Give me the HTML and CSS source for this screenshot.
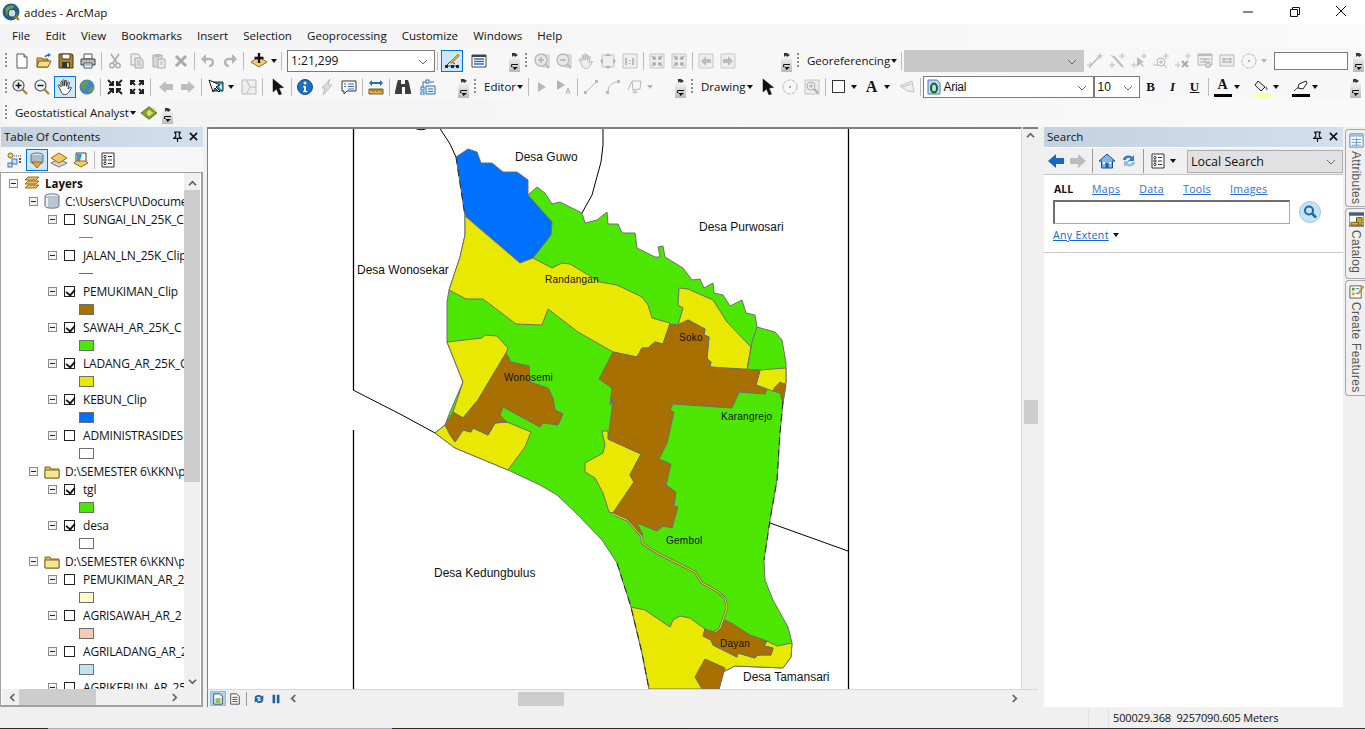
FILE: index.html
```html
<!DOCTYPE html>
<html lang="en">
<head>
<meta charset="utf-8">
<title>addes - ArcMap</title>
<link rel="stylesheet" href="styles.css">
</head>
<body>
<svg class="defs" width="0" height="0" aria-hidden="true">
  <defs>
    <symbol id="i-new" viewBox="0 0 16 16"><path d="M3 1h7l3 3v11H3z" fill="#fff" stroke="#555"/><path d="M10 1v3h3" fill="#ddd" stroke="#555"/></symbol>
    <symbol id="i-open" viewBox="0 0 16 16"><path d="M1 5h5l1 1h5v8H1z" fill="#d9b24a" stroke="#7a5b14"/><path d="M1 14l2-6h12l-3 6z" fill="#f5dc85" stroke="#7a5b14"/><path d="M9 4c1-2 3-2 4-2" fill="none" stroke="#1f6fb5" stroke-width="1.4"/><path d="M12 0l3 2-3 2z" fill="#1f6fb5"/></symbol>
    <symbol id="i-save" viewBox="0 0 16 16"><path d="M1 1h13l1 1v13H1z" fill="#a8842c" stroke="#4a3a10"/><path d="M4 1h8v5H4z" fill="#fff" stroke="#4a3a10"/><path d="M4 9h8v6H4z" fill="#39342a"/><path d="M9 10h2v4H9z" fill="#d9c88d"/></symbol>
    <symbol id="i-print" viewBox="0 0 16 16"><path d="M4 1h8v5H4z" fill="#fff" stroke="#555"/><path d="M1 6h14v6H1z" fill="#b9b9b9" stroke="#444"/><path d="M4 10h8v5H4z" fill="#fff" stroke="#555"/><path d="M5 12h6" stroke="#4a90d0"/></symbol>
    <symbol id="i-cut" viewBox="0 0 16 16"><path d="M4 1l6 9M12 1l-6 9" stroke="#aaa" stroke-width="1.6" fill="none"/><circle cx="5" cy="12.5" r="2.2" fill="none" stroke="#aaa" stroke-width="1.4"/><circle cx="11" cy="12.5" r="2.2" fill="none" stroke="#aaa" stroke-width="1.4"/></symbol>
    <symbol id="i-copy" viewBox="0 0 16 16"><path d="M2 1h7l2 2v9H2z" fill="#eee" stroke="#aaa"/><path d="M6 5h6l2 2v8H6z" fill="#e4e4e4" stroke="#aaa"/><path d="M8 8h4M8 10h4M8 12h4" stroke="#bbb"/></symbol>
    <symbol id="i-paste" viewBox="0 0 16 16"><path d="M2 2h9v12H2z" fill="#d8d8d8" stroke="#aaa"/><path d="M4 1h5v3H4z" fill="#bbb"/><path d="M7 6h7v9H7z" fill="#eee" stroke="#aaa"/><path d="M9 9h3M9 11h3" stroke="#bbb"/></symbol>
    <symbol id="i-del" viewBox="0 0 16 16"><path d="M3 3l10 10M13 3L3 13" stroke="#a9a9a9" stroke-width="3"/></symbol>
    <symbol id="i-undo" viewBox="0 0 16 16"><path d="M4 6h6c4 0 4 7-1 7" fill="none" stroke="#b4b4b4" stroke-width="2.4"/><path d="M6 1v10L1 6z" fill="#b4b4b4"/></symbol>
    <symbol id="i-redo" viewBox="0 0 16 16"><path d="M12 6H6c-4 0-4 7 1 7" fill="none" stroke="#b4b4b4" stroke-width="2.4"/><path d="M10 1v10l5-5z" fill="#b4b4b4"/></symbol>
    <symbol id="i-add" viewBox="0 0 16 16"><path d="M8 4l8 5-8 5-8-5z" fill="#f0cf7a" stroke="#8a6a1e"/><path d="M8 0v10M3.5 5h9" stroke="#111" stroke-width="2.4"/></symbol>
    <symbol id="i-edit" viewBox="0 0 16 16"><path d="M2 13h12" stroke="#444"/><path d="M2 13l5-5 4 3" fill="none" stroke="#444"/><rect x="1" y="12" width="3" height="3" fill="#222"/><rect x="7" y="12" width="3" height="3" fill="#222"/><rect x="12" y="12" width="3" height="3" fill="#222"/><path d="M6 9l8-8 1.5 1.5-8 8z" fill="#e3a93c" stroke="#8a5f10" stroke-width=".6"/></symbol>
    <symbol id="i-table" viewBox="0 0 16 16"><path d="M1 2h14v12H1z" fill="#fff" stroke="#444"/><path d="M1 2h14v2H1z" fill="#444"/><path d="M3 6h10M3 8.500h10M3 11h10" stroke="#2f6fc0" stroke-width="1.4"/></symbol>
    <symbol id="i-zin" viewBox="0 0 16 16"><circle cx="6.500" cy="6.500" r="5.500" fill="#eef3f7" stroke="#555" stroke-width="1.2"/><path d="M3.500 6.500h6M6.500 3.500v6" stroke="#111" stroke-width="1.5"/><path d="M10.500 10.500l4.500 4.500" stroke="#b37a3b" stroke-width="2.2"/></symbol>
    <symbol id="i-zout" viewBox="0 0 16 16"><circle cx="6.500" cy="6.500" r="5.500" fill="#eef3f7" stroke="#555" stroke-width="1.2"/><path d="M3.500 6.500h6" stroke="#111" stroke-width="1.5"/><path d="M10.500 10.500l4.500 4.500" stroke="#b37a3b" stroke-width="2.2"/></symbol>
    <symbol id="i-pan" viewBox="0 0 16 16"><path d="M3 10L1 6.500c0-1 1-1 1.500-.5L4 8V3c0-1 1.300-1 1.500 0L6 7V1.500c0-1 1.500-1 1.500 0V7l.8-5c.2-1 1.500-.8 1.400.2L9.500 7.500l1.500-4c.4-1 1.500-.6 1.300.4L11 10c2-2 3.500-2 3.500-1l-3 4.500c-1 1.500-2 2-4 2-2.500 0-3.500-2-4.500-5.500z" fill="#fff" stroke="#333" stroke-width=".9"/></symbol>
    <symbol id="i-globe" viewBox="0 0 16 16"><circle cx="8" cy="8" r="7.500" fill="#3f86c6"/><path d="M3 4c2-2 5-3 7-2l-1 3-3 1 1 3-2 2-3-3zM10 9l4-1 1 2-3 4-2-2z" fill="#6e9b3c"/></symbol>
    <symbol id="i-fin" viewBox="0 0 16 16"><path d="M1 1l5 5M6 2v4H2M15 1l-5 5M10 2v4h4M1 15l5-5M6 14v-4H2M15 15l-5-5M10 14v-4h4" fill="none" stroke="#222" stroke-width="2"/></symbol>
    <symbol id="i-fout" viewBox="0 0 16 16"><path d="M6 6L2 2M2 6V2h4M10 6l4-4M14 6V2h-4M6 10l-4 4M2 10v4h4M10 10l4 4M14 10v4h-4" fill="none" stroke="#222" stroke-width="2"/></symbol>
    <symbol id="i-back" viewBox="0 0 16 16"><path d="M1 8l7-6v3h7v6H8v3z" fill="#bdbdbd"/></symbol>
    <symbol id="i-fwd" viewBox="0 0 16 16"><path d="M15 8L8 2v3H1v6h7v3z" fill="#bdbdbd"/></symbol>
    <symbol id="i-sel" viewBox="0 0 16 16"><path d="M5 3h10v9H5z" fill="#27a3c9" stroke="#333"/><path d="M8 4l6 2v5z" fill="#e8eef2"/><path d="M1 1l4 12 2-4 4 4 1-1-4-4 4-2z" fill="#fff" stroke="#111"/></symbol>
    <symbol id="i-clear" viewBox="0 0 16 16"><path d="M1 1h14v14H1z" fill="#eee" stroke="#bbb"/><path d="M6 2l3 6-3 6M9 8h6" fill="none" stroke="#bbb"/></symbol>
    <symbol id="i-arrow" viewBox="0 0 16 16"><path d="M3 0l0 13 3.500-3 2.500 6 2.500-1-2.500-6 4.500-.5z" fill="#111" stroke="#111" stroke-width=".5"/></symbol>
    <symbol id="i-info" viewBox="0 0 16 16"><circle cx="8" cy="8" r="7.500" fill="#1c6dc4" stroke="#0f4f95"/><circle cx="8" cy="4" r="1.500" fill="#fff"/><path d="M6 7h3v5h1.200v1.200H6V12h1V8.200H6z" fill="#fff"/></symbol>
    <symbol id="i-bolt" viewBox="0 0 16 16"><path d="M11 0L3 9h3l-2 7 9-10h-4z" fill="#dedede" stroke="#bbb"/></symbol>
    <symbol id="i-pop" viewBox="0 0 16 16"><path d="M1 2h14v10H6l-3 3v-3H1z" fill="#fff" stroke="#333"/><path d="M3 5h2M7 5h6M3 7.500h2M7 7.500h6M7 10h6" stroke="#2c6fb3"/></symbol>
    <symbol id="i-meas" viewBox="0 0 16 16"><path d="M1 10h14v5H1z" fill="#e2b454" stroke="#7a5b14"/><path d="M3 10v2M5 10v3M7 10v2M9 10v3M11 10v2M13 10v3" stroke="#7a5b14"/><path d="M1 4l3-3v2h8V1l3 3-3 3V5H4v2z" fill="#1f6fb5"/></symbol>
    <symbol id="i-bino" viewBox="0 0 16 16"><path d="M2 4l1-3h3v4h4V1h3l1 3 2 9v2h-6V8H7v7H0v-2z" fill="#3d3d3d"/></symbol>
    <symbol id="i-tool" viewBox="0 0 16 16"><path d="M6 7h9v8H6z" fill="#eaf2f9" stroke="#2c6fb3"/><path d="M8 10h5M8 12.500h5" stroke="#2c6fb3"/><rect x="1" y="8" width="3" height="3" fill="#fff" stroke="#2c6fb3"/><rect x="1" y="13" width="3" height="3" fill="#fff" stroke="#2c6fb3"/><rect x="6" y="1" width="3" height="3" fill="#fff" stroke="#2c6fb3"/><path d="M3 8V3h3M10 3h4" fill="none" stroke="#2c6fb3"/></symbol>
    <symbol id="g-zin" viewBox="0 0 16 16"><path d="M9 2h6v12H9z" fill="#e6e6e6" stroke="#c4c4c4"/><circle cx="7" cy="7" r="6" fill="#e8e8e8" stroke="#b9b9b9" stroke-width="1.400"/><path d="M4 7h6M7 4v6" stroke="#b0b0b0" stroke-width="1.500"/><path d="M11 11l4 4" stroke="#b9b9b9" stroke-width="2"/></symbol>
    <symbol id="g-zout" viewBox="0 0 16 16"><path d="M9 2h6v12H9z" fill="#e6e6e6" stroke="#c4c4c4"/><circle cx="7" cy="7" r="6" fill="#e8e8e8" stroke="#b9b9b9" stroke-width="1.400"/><path d="M4 7h6" stroke="#b0b0b0" stroke-width="1.500"/><path d="M11 11l4 4" stroke="#b9b9b9" stroke-width="2"/></symbol>
    <symbol id="g-pan" viewBox="0 0 16 16"><path d="M3 10L1 6.500c0-1 1-1 1.500-.5L4 8V3c0-1 1.300-1 1.500 0L6 7V1.500c0-1 1.500-1 1.500 0V7l.8-5c.2-1 1.500-.8 1.400.2L9.500 7.500l1.500-4c.4-1 1.500-.6 1.300.4L11 10c2-2 3.500-2 3.500-1l-3 4.500c-1 1.500-2 2-4 2-2.500 0-3.500-2-4.500-5.500z" fill="#eee" stroke="#b9b9b9"/></symbol>
    <symbol id="g-full" viewBox="0 0 16 16"><path d="M2 2h12v12H2z" fill="#eee" stroke="#c4c4c4"/><path d="M8 0l3 3H5zM8 16l-3-3h6zM0 8l3-3v6zM16 8l-3 3V5z" fill="#b4b4b4"/></symbol>
    <symbol id="g-one" viewBox="0 0 16 16"><path d="M1 1h14v14H1z" fill="#eee" stroke="#c4c4c4"/><path d="M4 5v7M7.500 7v1M7.500 10v1M11 5v7" stroke="#aaa" stroke-width="1.500"/></symbol>
    <symbol id="g-fin" viewBox="0 0 16 16"><path d="M1 1h14v14H1z" fill="#eee" stroke="#c9c9c9"/><path d="M3 3l3 3M6 3.500V6H3.500M13 3l-3 3M10 3.500V6h2.500M3 13l3-3M6 12.500V10H3.500M13 13l-3-3M10 12.500V10h2.500" fill="none" stroke="#aaa" stroke-width="1.500"/></symbol>
    <symbol id="g-back" viewBox="0 0 16 16"><path d="M1 1h14v14H1z" fill="#eee" stroke="#c9c9c9"/><path d="M3 8l5-5v3h5v4H8v3z" fill="#bbb"/></symbol>
    <symbol id="g-fwd" viewBox="0 0 16 16"><path d="M1 1h14v14H1z" fill="#eee" stroke="#c9c9c9"/><path d="M13 8L8 3v3H3v4h5v3z" fill="#bbb"/></symbol>
    <symbol id="g-tri" viewBox="0 0 16 16"><path d="M4 3l8 5-8 5z" fill="#b9b9b9"/></symbol>
    <symbol id="g-tria" viewBox="0 0 16 16"><path d="M1 1l8 5-8 5z" fill="#b4b4b4"/><path d="M10 15l2-6 2 6M11 13h2" fill="none" stroke="#b4b4b4"/></symbol>
    <symbol id="g-line" viewBox="0 0 16 16"><path d="M3 13L13 3" stroke="#b9b9b9"/><rect x="1" y="12" width="3" height="3" fill="#b9b9b9"/><rect x="12" y="1" width="3" height="3" fill="#b9b9b9"/></symbol>
    <symbol id="g-curve" viewBox="0 0 16 16"><path d="M3 13C3 7 7 3 13 3" fill="none" stroke="#b9b9b9"/><rect x="1" y="12" width="3" height="3" fill="#b9b9b9"/><rect x="12" y="1" width="3" height="3" fill="#b9b9b9"/></symbol>
    <symbol id="g-poly" viewBox="0 0 16 16"><path d="M5 2h9l-1 8-7 1z M5 2L1 11" fill="none" stroke="#b9b9b9"/><path d="M8 10v5M5 13h6" stroke="#b9b9b9"/></symbol>
    <symbol id="g-rot" viewBox="0 0 16 16"><circle cx="8" cy="8" r="7" fill="none" stroke="#bbb" stroke-dasharray="4 1"/><rect x="7" y="7" width="2" height="2" fill="#aaa"/></symbol>
    <symbol id="g-snap" viewBox="0 0 16 16"><path d="M1 1h14v14H1z" fill="#ececec" stroke="#c4c4c4"/><circle cx="7" cy="7" r="4" fill="none" stroke="#aaa"/><path d="M5 7h4M7 5v4" stroke="#aaa"/><path d="M10 10l4 4" stroke="#aaa" stroke-width="2"/></symbol>
    <symbol id="g-shape" viewBox="0 0 16 16"><path d="M1 7l12-5 2 11-7-1z" fill="#eee" stroke="#c4c4c4"/><path d="M3 8l9-3" stroke="#c4c4c4"/></symbol>
    <symbol id="g-link" viewBox="0 0 16 16"><path d="M2 14L14 2" stroke="#b4b4b4" stroke-width="1.300"/><path d="M10 3h6M13 0v6M0 12h6M3 9v6" stroke="#c0c0c0"/></symbol>
    <symbol id="g-wand" viewBox="0 0 16 16"><path d="M4 3l10 11" stroke="#bdbdbd" stroke-width="2"/><path d="M10 3h6M13 0v6M0 12h6M3 9v6" stroke="#c0c0c0"/><path d="M2 2l2 2" stroke="#ccc"/></symbol>
    <symbol id="g-ptr" viewBox="0 0 16 16"><path d="M6 4l0 10 3-3 3 3 1-1-3-3 3-1z" fill="#bbb"/><path d="M10 3h6M13 0v6M0 12h6M3 9v6" stroke="#c0c0c0"/></symbol>
    <symbol id="g-zmp" viewBox="0 0 16 16"><circle cx="8" cy="9" r="4" fill="none" stroke="#b4b4b4"/><path d="M6 9h4M8 7v4M11 12l3 3" stroke="#b4b4b4"/><path d="M10 3h6M13 0v6M0 12h5" stroke="#c0c0c0"/></symbol>
    <symbol id="g-xpt" viewBox="0 0 16 16"><path d="M7 8l6 6M13 8l-6 6" stroke="#aaa" stroke-width="2"/><path d="M10 3h6M13 0v6M0 12h5M3 9v6" stroke="#c0c0c0"/></symbol>
    <symbol id="g-tb1" viewBox="0 0 16 16"><path d="M1 1h14v11H1z" fill="#eee" stroke="#b9b9b9"/><path d="M1 1h14v2H1z" fill="#bbb"/><path d="M3 6h10M3 9h10M8 6v3" stroke="#aaa"/><circle cx="11" cy="12" r="2.500" fill="#ddd" stroke="#aaa"/></symbol>
    <symbol id="g-tb2" viewBox="0 0 16 16"><path d="M1 2h14v11H1z" fill="#eee" stroke="#b9b9b9"/><path d="M3 6h10M3 9h10M5 5v5M11 5v5" stroke="#aaa"/></symbol>
    <symbol id="i-tocl" viewBox="0 0 16 16"><path d="M5 4h10M5 8h2" stroke="#444" stroke-dasharray="1 1"/><circle cx="3.500" cy="3.500" r="2.500" fill="#f0cf7a" stroke="#8a6a1e"/><rect x="5" y="7" width="5" height="5" fill="#cfe0f2" stroke="#3a78b5"/><rect x="1" y="11" width="4" height="4" fill="#cfe0f2" stroke="#3a78b5"/><path d="M12 7h2M12 10h2" stroke="#222" stroke-width="1.500"/></symbol>
    <symbol id="i-tocd" viewBox="0 0 16 16"><ellipse cx="8" cy="3" rx="6" ry="2" fill="#dfe5ea" stroke="#5f6f7e"/><path d="M2 3v7c0 1 2 2 6 2s6-1 6-2V3" fill="#aebbc7" stroke="#5f6f7e"/><path d="M3 10h10l-5 6z" fill="#e8a92e" stroke="#9b6a0d"/></symbol>
    <symbol id="i-tocv" viewBox="0 0 16 16"><path d="M8 7l8 4-8 4-8-4z" fill="#d6d6d6" stroke="#777"/><path d="M8 1l8 5-8 5-8-5z" fill="#f2c964" stroke="#9b6a0d"/></symbol>
    <symbol id="i-tocs" viewBox="0 0 16 16"><path d="M3 1h10v9H3z" fill="#fff" stroke="#444"/><path d="M4 2h5l-2 7H4z" fill="#2aa3c9"/><path d="M3 9h10l2 2-7 4-7-4z" fill="#f2c964" stroke="#9b6a0d"/></symbol>
    <symbol id="i-list" viewBox="0 0 16 16"><path d="M2 1h12v14H2z" fill="#fff" stroke="#333"/><circle cx="5" cy="4.500" r="1.200" fill="none" stroke="#333"/><circle cx="5" cy="8" r="1.200" fill="none" stroke="#333"/><circle cx="5" cy="11.500" r="1.200" fill="none" stroke="#333"/><path d="M8 4.500h4M8 8h4M8 11.500h4" stroke="#333"/></symbol>
    <symbol id="i-layers" viewBox="0 0 16 16"><path d="M4 2h11l-3 3H1zM4 6h11l-3 3H1zM4 10h11l-3 3H1z" fill="#eec05b" stroke="#8a6113" stroke-width=".9"/></symbol>
    <symbol id="i-db" viewBox="0 0 16 16"><ellipse cx="8" cy="3" rx="7" ry="2.200" fill="#e6ebf0" stroke="#6b7884"/><path d="M1 3v10c0 1.300 3 2.200 7 2.200s7-.9 7-2.200V3" fill="#b8c4cf" stroke="#6b7884"/><path d="M3 5v9" stroke="#eef" stroke-width="2"/></symbol>
    <symbol id="i-folder" viewBox="0 0 16 16"><path d="M1 3h5l1 2h8v9H1z" fill="#d7b957" stroke="#806a25"/><path d="M1 6h14v8H1z" fill="#f6e592" stroke="#806a25"/></symbol>
    <symbol id="i-home" viewBox="0 0 16 16"><path d="M8 1L0 8h2.500v7h11V8H16z" fill="#7fb6e6" stroke="#174f8c"/><path d="M6.500 10h3v5h-3z" fill="#1f5fa5"/><path d="M4 9h2v2H4zM10 9h2v2h-2z" fill="#fff"/></symbol>
    <symbol id="i-ref" viewBox="0 0 16 16"><path d="M2 7c0-4 6-6 9-3l2-2v6H7l2.500-2.500C8 4 5 5 5 7z" fill="#2f7fc7"/><path d="M14 9c0 4-6 6-9 3l-2 2V8h6l-2.500 2.500C8 12 11 11 11 9z" fill="#8fbde6"/></symbol>
    <symbol id="i-blue" viewBox="0 0 16 16"><path d="M0 8l8-7v4h8v6H8v4z" fill="#1867c0"/></symbol>
    <symbol id="i-grey" viewBox="0 0 16 16"><path d="M16 8L8 1v4H0v6h8v4z" fill="#bdbdbd"/></symbol>
    <symbol id="i-pin" viewBox="0 0 10 12"><path d="M2 1h6v1H7v4l2 2H1l2-2V2H2zM5 8v4" fill="none" stroke="#111" stroke-width="1.300"/></symbol>
    <symbol id="i-x" viewBox="0 0 10 10"><path d="M1 1l8 8M9 1L1 9" stroke="#111" stroke-width="1.800"/></symbol>
    <symbol id="i-chev" viewBox="0 0 10 6"><path d="M1 1l4 4 4-4" fill="none" stroke="#666"/></symbol>
    <symbol id="i-up" viewBox="0 0 10 8"><path d="M1 6l4-4 4 4" fill="none" stroke="#606060" stroke-width="2"/></symbol>
    <symbol id="i-dn" viewBox="0 0 10 8"><path d="M1 2l4 4 4-4" fill="none" stroke="#606060" stroke-width="2"/></symbol>
    <symbol id="i-lt" viewBox="0 0 8 10"><path d="M6 1L2 5l4 4" fill="none" stroke="#606060" stroke-width="2"/></symbol>
    <symbol id="i-rt" viewBox="0 0 8 10"><path d="M2 1l4 4-4 4" fill="none" stroke="#606060" stroke-width="2"/></symbol>
    <symbol id="i-dv" viewBox="0 0 14 14"><path d="M2 1h7l3 3v9H2z" fill="#fff" stroke="#333"/><path d="M4 6h6v6H4z" fill="#8ec06c"/></symbol>
    <symbol id="i-lv" viewBox="0 0 14 14"><path d="M2 1h7l3 3v9H2z" fill="#fff" stroke="#333"/><path d="M4 5h6M4 7.500h6M4 10h6" stroke="#333"/></symbol>
    <symbol id="i-spin" viewBox="0 0 14 14"><path d="M2 6c0-4 6-5 8-2l2-1v5H7l2-2C8 4 5 4 4 6z" fill="#1c5f9f"/><path d="M12 8c0 4-6 5-8 2l-2 1V6h5L5 8c1 2 4 2 5 0z" fill="#1c5f9f"/></symbol>
    <symbol id="i-pause" viewBox="0 0 14 14"><path d="M3 2h3v10H3zM8 2h3v10H8z" fill="#1c5f9f"/></symbol>
    <symbol id="i-fontO" viewBox="0 0 14 16"><path d="M1 1h9l3 3v11H1z" fill="#bcd8f3" stroke="#4a7fb5"/><ellipse cx="7" cy="9" rx="3" ry="4.500" fill="none" stroke="#0d6b0d" stroke-width="2"/></symbol>
    <symbol id="i-geo" viewBox="0 0 18 16"><path d="M9 1l9 7-9 7-9-7z" fill="#7f9f2c" stroke="#56701a"/><path d="M9 4l5 4-5 4-3-4z" fill="#d7de6f"/><path d="M12 1l5 3-2 2z" fill="#e8d66b"/></symbol>
    <symbol id="i-fill" viewBox="0 0 16 12"><path d="M4 1l7 6-4 4-6-6z" fill="#eee" stroke="#222"/><path d="M12 6c2 2 2 4 1 4s-2-2-1-4z" fill="#777"/></symbol>
    <symbol id="i-pen" viewBox="0 0 16 12"><path d="M5 8l1-4 7-3 1 2-4 6z" fill="#fff" stroke="#222"/><path d="M1 11c2-2 3-3 4-3" fill="none" stroke="#222"/></symbol>
    <symbol id="i-tabA" viewBox="0 0 16 16"><path d="M1 1h14v14H1z" fill="#fff" stroke="#4a7fb5"/><path d="M1 1h14v3H1z" fill="#9dbde0"/><path d="M3 7h10M3 10h10M3 13h10M8 5v9" stroke="#6a95c4"/></symbol>
    <symbol id="i-tabC" viewBox="0 0 16 16"><path d="M0 1h16v14H0z" fill="#fff" stroke="#333"/><path d="M0 1h16v3H0z" fill="#3a5f9a"/><path d="M8 6h6v8H8z" fill="#c9a72c" stroke="#6b5510"/><path d="M2 11h8v3H2z" fill="#d8b53a" stroke="#6b5510"/></symbol>
    <symbol id="i-tabF" viewBox="0 0 16 16"><path d="M1 2h12v13H1z" fill="#fff" stroke="#555"/><path d="M3 4h3v3H3z" fill="#4aa04a"/><path d="M3 9h3v3H3z" fill="#d8a23a"/><path d="M7 5h4M7 10h4" stroke="#3a6fb5"/><path d="M9 10l6-8 1 1-6 8z" fill="#e8a92e" stroke="#8a5f10" stroke-width=".5"/></symbol>
    <symbol id="i-lens" viewBox="0 0 22 22"><circle cx="11" cy="11" r="10.500" fill="#c3e2f5" stroke="#9cc8e4"/><circle cx="10" cy="9.500" r="4" fill="none" stroke="#176a9e" stroke-width="2"/><path d="M13 12.500l4 4" stroke="#176a9e" stroke-width="2.500"/></symbol>
  </defs>
</svg>

<div class="app">
  <header class="title">
    <svg class="appicon" viewBox="0 0 16 16"><circle cx="8" cy="8" r="7.500" fill="#1f5f8f"/><path d="M3 5c2-3 6-4 8-2l-2 3-3 1 1 3-3 1zM10 10l4-2-1 4-3 2z" fill="#66a05a"/><circle cx="9" cy="9" r="3.500" fill="#bfe0ef" stroke="#333"/><path d="M12 12l3 3" stroke="#a8752a" stroke-width="2"/></svg>
    <span class="title-text">addes - ArcMap</span>
    <div class="winbtns">
      <svg class="wb" viewBox="0 0 46 24"><path d="M17 12h10" stroke="#111"/></svg>
      <svg class="wb" viewBox="0 0 46 24"><path d="M18.500 9.500h7v7h-7zM20.500 9.500v-2h7v7h-2" fill="none" stroke="#111"/></svg>
      <svg class="wb" viewBox="0 0 46 24"><path d="M18 6l10 10M28 6L18 16" stroke="#111"/></svg>
    </div>
  </header>

  <nav class="menu">
    <span>File</span><span>Edit</span><span>View</span><span>Bookmarks</span><span>Insert</span><span>Selection</span><span>Geoprocessing</span><span>Customize</span><span>Windows</span><span>Help</span>
  </nav>

  <div class="bars">
    <div class="row">
      <div class="tb t1">
        <i class="grip"></i>
        <b class="ic"><svg><use href="#i-new"/></svg></b><b class="ic"><svg><use href="#i-open"/></svg></b><b class="ic"><svg><use href="#i-save"/></svg></b><b class="ic"><svg><use href="#i-print"/></svg></b>
        <i class="sep"></i>
        <b class="ic"><svg><use href="#i-cut"/></svg></b><b class="ic"><svg><use href="#i-copy"/></svg></b><b class="ic"><svg><use href="#i-paste"/></svg></b><b class="ic"><svg><use href="#i-del"/></svg></b>
        <i class="sep"></i>
        <b class="ic"><svg><use href="#i-undo"/></svg></b><b class="ic"><svg><use href="#i-redo"/></svg></b>
        <i class="sep"></i>
        <b class="ic m2"><svg><use href="#i-add"/></svg></b><i class="drop"></i>
        <i class="sep"></i>
        <div class="combo scale m3"><span>1:21,299</span><svg class="chev"><use href="#i-chev"/></svg></div>
        <i class="sep"></i>
        <b class="ic on m1"><svg><use href="#i-edit"/></svg></b><b class="ic m5"><svg><use href="#i-table"/></svg></b>
      </div>
      <i class="over o1"></i>
      <div class="tb t2">
        <i class="grip"></i>
        <b class="ic"><svg><use href="#g-zin"/></svg></b><b class="ic"><svg><use href="#g-zout"/></svg></b><b class="ic"><svg><use href="#g-pan"/></svg></b><b class="ic"><svg><use href="#g-full"/></svg></b><b class="ic"><svg><use href="#g-one"/></svg></b>
        <i class="sep"></i>
        <b class="ic"><svg><use href="#g-fin"/></svg></b><b class="ic"><svg><use href="#g-fin"/></svg></b>
        <i class="sep"></i>
        <b class="ic"><svg><use href="#g-back"/></svg></b><b class="ic"><svg><use href="#g-fwd"/></svg></b>
      </div>
      <i class="over o2"></i>
      <div class="tb t3">
        <i class="grip"></i>
        <span class="lab geo">Georeferencing</span><i class="drop dk"></i>
        <i class="sep"></i>
        <div class="combo georef"><svg class="chev"><use href="#i-chev"/></svg></div>
        <b class="ic"><svg><use href="#g-link"/></svg></b><b class="ic"><svg><use href="#g-wand"/></svg></b><b class="ic"><svg><use href="#g-ptr"/></svg></b><b class="ic"><svg><use href="#g-zmp"/></svg></b><b class="ic"><svg><use href="#g-xpt"/></svg></b><b class="ic"><svg><use href="#g-tb1"/></svg></b><b class="ic"><svg><use href="#g-tb2"/></svg></b><b class="ic"><svg><use href="#g-rot"/></svg></b><i class="drop lt"></i>
        <div class="combo rotinp"></div>
      </div>
      <i class="over o3"></i>
    </div>

    <div class="row">
      <div class="tb t4">
        <i class="grip"></i>
        <b class="ic"><svg><use href="#i-zin"/></svg></b><b class="ic"><svg><use href="#i-zout"/></svg></b><b class="ic on m1"><svg><use href="#i-pan"/></svg></b><b class="ic"><svg><use href="#i-globe"/></svg></b>
        <i class="sep"></i>
        <b class="ic m1"><svg><use href="#i-fin"/></svg></b><b class="ic"><svg><use href="#i-fout"/></svg></b>
        <i class="sep"></i>
        <b class="ic m2"><svg><use href="#i-back"/></svg></b><b class="ic"><svg><use href="#i-fwd"/></svg></b>
        <i class="sep"></i>
        <b class="ic m1"><svg><use href="#i-sel"/></svg></b><i class="drop"></i><b class="ic m2"><svg><use href="#i-clear"/></svg></b>
        <i class="sep"></i>
        <b class="ic m2"><svg><use href="#i-arrow"/></svg></b>
        <i class="sep"></i>
        <b class="ic"><svg><use href="#i-info"/></svg></b><b class="ic"><svg><use href="#i-bolt"/></svg></b><b class="ic"><svg><use href="#i-pop"/></svg></b>
        <i class="sep"></i>
        <b class="ic"><svg><use href="#i-meas"/></svg></b>
        <i class="sep"></i>
        <b class="ic"><svg><use href="#i-bino"/></svg></b><b class="ic m3"><svg><use href="#i-tool"/></svg></b>
      </div>
      <i class="over o4"></i>
      <div class="tb t5">
        <i class="grip"></i>
        <span class="lab">Editor</span><i class="drop dk"></i>
        <i class="sep m2"></i>
        <b class="ic"><svg><use href="#g-tri"/></svg></b><b class="ic"><svg><use href="#g-tria"/></svg></b>
        <i class="sep"></i>
        <b class="ic"><svg><use href="#g-line"/></svg></b><b class="ic"><svg><use href="#g-curve"/></svg></b><b class="ic"><svg><use href="#g-poly"/></svg></b><i class="drop lt"></i>
      </div>
      <i class="over o5"></i>
      <div class="tb t6">
        <i class="grip"></i>
        <span class="lab">Drawing</span><i class="drop dk"></i>
        <b class="ic m2"><svg><use href="#i-arrow"/></svg></b><b class="ic"><svg><use href="#g-rot"/></svg></b><b class="ic"><svg><use href="#g-snap"/></svg></b>
        <i class="sep"></i>
        <b class="ic"><span class="rect"></span></b><i class="drop dk"></i>
        <b class="ic bigA m2">A</b><i class="drop dk"></i>
        <b class="ic m4"><svg><use href="#g-shape"/></svg></b>
        <i class="sep"></i>
        <div class="combo font"><svg class="fo"><use href="#i-fontO"/></svg><span>Arial</span><svg class="chev"><use href="#i-chev"/></svg></div>
        <div class="combo size"><span>10</span><svg class="chev"><use href="#i-chev"/></svg></div>
        <b class="fmt">B</b><b class="fmt it">I</b><b class="fmt un">U</b>
        <i class="sep"></i>
        <b class="colr m2"><span class="cA">A</span><i class="cbar cb-k"></i></b><i class="drop dk"></i>
        <b class="colr m10"><svg class="cs"><use href="#i-fill"/></svg><i class="cbar cb-y"></i></b><i class="drop dk"></i>
        <b class="colr m10"><svg class="cs"><use href="#i-pen"/></svg><i class="cbar cb-k"></i></b><i class="drop dk"></i>
      </div>
      <i class="over o6"></i>
    </div>

    <div class="row">
      <div class="tb t7">
        <i class="grip"></i>
        <span class="lab gs">Geostatistical Analyst</span><i class="drop dk"></i>
        <b class="ic"><svg><use href="#i-geo"/></svg></b>
      </div>
      <i class="over o7"></i>
    </div>
  </div>

  <main class="main">
    <section class="toc">
      <div class="dockhead"><span>Table Of Contents</span><svg class="pin"><use href="#i-pin"/></svg><svg class="close"><use href="#i-x"/></svg></div>
      <div class="toctools">
        <b class="ic"><svg><use href="#i-tocl"/></svg></b><b class="ic on"><svg><use href="#i-tocd"/></svg></b><b class="ic"><svg><use href="#i-tocv"/></svg></b><b class="ic"><svg><use href="#i-tocs"/></svg></b>
        <i class="sep"></i>
        <b class="ic"><svg><use href="#i-list"/></svg></b>
      </div>
      <div class="treebox">
        <div class="treewrap">
          <div class="tree">
            <div class="tr l0"><i class="ex"></i><svg class="ti"><use href="#i-layers"/></svg><strong>Layers</strong></div>
            <div class="tr l1"><i class="ex"></i><svg class="ti"><use href="#i-db"/></svg><span>C:\Users\CPU\Documen</span></div>
            <div class="tr l2"><i class="ex"></i><i class="cb"></i><span>SUNGAI_LN_25K_C</span></div>
            <div class="lg"><i class="ln ln-b"></i></div>
            <div class="tr l2"><i class="ex"></i><i class="cb"></i><span>JALAN_LN_25K_Clip</span></div>
            <div class="lg"><i class="ln ln-r"></i></div>
            <div class="tr l2"><i class="ex"></i><i class="cb ck"></i><span>PEMUKIMAN_Clip</span></div>
            <div class="lg"><i class="sw s-br"></i></div>
            <div class="tr l2"><i class="ex"></i><i class="cb ck"></i><span>SAWAH_AR_25K_C</span></div>
            <div class="lg"><i class="sw s-gr"></i></div>
            <div class="tr l2"><i class="ex"></i><i class="cb ck"></i><span>LADANG_AR_25K_C</span></div>
            <div class="lg"><i class="sw s-ye"></i></div>
            <div class="tr l2"><i class="ex"></i><i class="cb ck"></i><span>KEBUN_Clip</span></div>
            <div class="lg"><i class="sw s-bl"></i></div>
            <div class="tr l2"><i class="ex"></i><i class="cb"></i><span>ADMINISTRASIDES</span></div>
            <div class="lg"><i class="sw s-wh"></i></div>
            <div class="tr l1"><i class="ex"></i><svg class="ti"><use href="#i-folder"/></svg><span>D:\SEMESTER 6\KKN\p</span></div>
            <div class="tr l2"><i class="ex"></i><i class="cb ck"></i><span>tgl</span></div>
            <div class="lg"><i class="sw s-gr"></i></div>
            <div class="tr l2"><i class="ex"></i><i class="cb ck"></i><span>desa</span></div>
            <div class="lg"><i class="sw s-wh"></i></div>
            <div class="tr l1"><i class="ex"></i><svg class="ti"><use href="#i-folder"/></svg><span>D:\SEMESTER 6\KKN\p</span></div>
            <div class="tr l2"><i class="ex"></i><i class="cb"></i><span>PEMUKIMAN_AR_2</span></div>
            <div class="lg"><i class="sw s-py"></i></div>
            <div class="tr l2"><i class="ex"></i><i class="cb"></i><span>AGRISAWAH_AR_2</span></div>
            <div class="lg"><i class="sw s-pk"></i></div>
            <div class="tr l2"><i class="ex"></i><i class="cb"></i><span>AGRILADANG_AR_2</span></div>
            <div class="lg"><i class="sw s-pb"></i></div>
            <div class="tr l2"><i class="ex"></i><i class="cb"></i><span>AGRIKEBUN_AR_25</span></div>
          </div>
          <div class="vs tocv"><svg class="sa"><use href="#i-up"/></svg><i class="thumb"></i><svg class="sa dn"><use href="#i-dn"/></svg></div>
        </div>
        <div class="hs toch"><svg class="sb"><use href="#i-lt"/></svg><i class="thumb"></i><svg class="sb rt"><use href="#i-rt"/></svg></div>
      </div>
    </section>

    <section class="mapcol">
      <div class="maprow">
        <svg class="map" viewBox="208 129 813 560" preserveAspectRatio="none">
          <g fill="none" stroke="#000">
            <path d="M353.500 127V390M353.500 430V690" stroke-width="1.300"/>
            <path d="M848.500 127V690" stroke-width="1.300"/>
            <path d="M353 390L400 414L435 433"/>
            <path d="M770 523L848 551"/>
            <path d="M439 127L450 144L456 157"/>
            <path d="M413 127Q420 132 428 128"/>
            <path d="M603 127V145L601 162L592 195L582 213"/>
          </g>
          <g stroke="#6e6e6e" stroke-width="1" stroke-linejoin="round">
            <path fill="#4ce600" d="M528 195L537 187L545 193L552 204L560 202L582 213L585 223L597 220L607 212L608 224L618 224L622 233L635 233L637 248L655 257L660 257L658 247L663 246L665 257L683 268L692 280L700 279L704 288L713 283L714 293L723 295L730 306L742 300L746 313L755 315L757 327L775 332L782 340L786 363L786 382L783 402L780 433L777 480L770 520L764 560L765 580L773 600L788 627L792 643L791 657L783 668L735 666L723 672L719 689L649 689L642 653L631 607L617 563L602 540L575 512L557 495L540 485L508 470L455 448L435 433L445 425L450 412L463 382L455 362L447 342L447 302L449 290L460 257L465 235L465 216Z"/>
            <path fill="#0070ff" d="M456 157L468 149L477 152L481 163L492 163L503 172L517 172L528 180L528 195L552 222L551 235L533 258L520 263L465 216Z"/>
            <path fill="#e8e800" d="M465 216L520 263L533 258L552 268L562 263L570 264L600 282L617 285L642 297L648 305L652 318L670 323L663 344L655 342L648 348L642 348L637 357L613 352L578 332L548 309L542 325L516 324L483 299L466 299L449 290L460 257L465 235Z"/>
            <path fill="#e8e800" d="M447 342L482 338L485 335L497 336L508 348L506 353L478 400L463 418L453 412L463 382L455 362Z"/>
            <path fill="#e8e800" d="M435 433L445 425L455 431L455 442L463 430L471 432L473 428L488 435L495 423L507 422L531 432L525 447L508 470L455 448Z"/>
            <path fill="#e8e800" d="M602 431L608 431L608 439L641 454L630 475L634 482L613 513L609 512L603 493L595 478L585 472L585 463L603 453L605 445Z"/>
            <path fill="#e8e800" d="M679 288L688 289L713 300L727 322L751 347L747 370L710 367L711 362L707 358L709 337L704 335L705 329L688 320L678 325L683 308L678 305Z"/>
            <path fill="none" d="M757 327L752 342L747 370"/>
            <path fill="#e8e800" d="M760 370L786 368L786 383L775 387L773 391L756 385Z"/>
            <path fill="#a87000" d="M775 387L780 382L786 385L783 403L780 393L773 391Z"/>
            <path fill="#a87000" d="M506 353L511 362L529 366L530 382L548 388L553 398L555 410L563 414L558 425L543 423L540 427L503 407L500 415L507 422L495 423L488 435L473 428L471 432L463 430L455 442L450 435L445 425L453 412L463 418L478 400Z"/>
            <path fill="#a87000" d="M670 324L678 325L688 320L705 329L704 335L709 337L707 358L711 362L710 367L760 370L756 385L767 390L765 394L739 392L732 408L673 404L670 410L674 412L667 443L659 459L671 464L666 485L676 492L674 506L678 507L672 528L663 526L657 531L637 523L643 535L640 536L627 520L613 513L634 482L630 475L641 454L608 439L613 400L610 405L612 388L599 379L613 352L637 357L642 348L648 348L655 342L663 344Z"/>
            <path fill="#e8e800" d="M631 607L645 610L670 627L673 620L680 616L690 618L705 629L703 636L711 640L713 645L737 657L738 653L755 658L758 655L771 655L773 648L764 646L767 641L777 646L792 643L791 657L783 668L735 666L723 672L719 689L649 689L642 653Z"/>
            <path fill="#a87000" d="M725 620L733 624L750 635L767 641L764 646L773 648L771 655L758 655L755 658L738 653L737 657L713 645L711 640L703 636L705 629L715 632L720 628Z"/>
            <path fill="#a87000" d="M705 659L725 668L719 689L702 689L695 677Z"/>
          </g>
          <path d="M613 514L627 520L642 537L642 543L657 553L695 572L702 583L717 591L725 598L727 608L720 628L715 632" fill="none" stroke="#6e6e6e" stroke-width="2.600"/>
          <path d="M613 514L627 520L642 537L642 543L657 553L695 572L702 583L717 591L725 598L727 608L720 628L715 632" fill="none" stroke="#e8e800" stroke-width="1"/>
          <path d="M456 157L465 216M783 402L780 433L777 480L770 520L764 560M617 563L631 607L642 653L649 689" fill="none" stroke="#111" stroke-width=".8" stroke-dasharray="7 5"/>
          <g class="lbl-lg">
            <text x="515" y="161">Desa Guwo</text>
            <text x="699" y="231">Desa Purwosari</text>
            <text x="357" y="274">Desa Wonosekar</text>
            <text x="434" y="577">Desa Kedungbulus</text>
            <text x="743" y="681">Desa Tamansari</text>
          </g>
          <g class="lbl-sm">
            <text x="545" y="283">Randangan</text>
            <text x="679" y="341">Soko</text>
            <text x="504" y="381">Wonosemi</text>
            <text x="721" y="420">Karangrejo</text>
            <text x="666" y="544">Gembol</text>
            <text x="720" y="647">Dayan</text>
          </g>
        </svg>
        <div class="vs mapv"><svg class="sa"><use href="#i-up"/></svg><i class="thumb"></i></div>
      </div>
      <div class="maph">
        <b class="vb on"><svg><use href="#i-dv"/></svg></b><b class="vb"><svg><use href="#i-lv"/></svg></b><i class="vsep"></i>
        <b class="vb"><svg><use href="#i-spin"/></svg></b><b class="vb"><svg><use href="#i-pause"/></svg></b>
        <svg class="sb ml"><use href="#i-lt"/></svg><i class="thumb"></i><svg class="sb rt"><use href="#i-rt"/></svg>
      </div>
    </section>

    <section class="search">
      <div class="dockhead"><span>Search</span><svg class="pin"><use href="#i-pin"/></svg><svg class="close"><use href="#i-x"/></svg></div>
      <div class="stools">
        <b class="ic"><svg><use href="#i-blue"/></svg></b><b class="ic"><svg><use href="#i-grey"/></svg></b>
        <i class="sep tall"></i>
        <b class="ic"><svg><use href="#i-home"/></svg></b><b class="ic"><svg><use href="#i-ref"/></svg></b>
        <i class="sep tall"></i>
        <b class="ic"><svg><use href="#i-list"/></svg></b><i class="drop dk"></i>
        <div class="combo local"><span>Local Search</span><svg class="chev"><use href="#i-chev"/></svg></div>
      </div>
      <div class="sbody">
        <div class="tabs"><strong>ALL</strong><a>Maps</a><a>Data</a><a>Tools</a><a>Images</a></div>
        <div class="sinput"><div class="sfield"></div><svg class="lens"><use href="#i-lens"/></svg></div>
        <div class="extent"><a>Any Extent</a><i class="drop dk"></i></div>
      </div>
    </section>

    <aside class="sidetabs">
      <div class="stab a"><svg><use href="#i-tabA"/></svg><span>Attributes</span></div>
      <div class="stab c"><svg><use href="#i-tabC"/></svg><span>Catalog</span></div>
      <div class="stab f"><svg><use href="#i-tabF"/></svg><span>Create Features</span></div>
    </aside>
  </main>

  <footer class="status">
    <i class="stcell c1"></i><i class="stcell c2"></i>
    <span>500029.368&nbsp;&nbsp;9257090.605 Meters</span>
  </footer>
  <div class="taskline"><i class="tk d1"></i><i class="tk g1"></i><i class="tk d2"></i></div>
</div>
</body>
</html>
```

FILE: styles.css
```css
* { box-sizing: border-box; }
html, body { margin: 0; padding: 0; height: 100%; overflow: hidden; }
body { font: 11.500px "Open Sans", "Liberation Sans", sans-serif; color: #111; background: #f0f0f0; }
.defs { position: absolute; }
i, b { display: block; font-style: normal; font-weight: normal; flex: none; }
.app { width: 1365px; height: 729px; display: flex; flex-direction: column; overflow: hidden; }
.m1 { margin-left: 1px; }
.m2 { margin-left: 2px; }
.m3 { margin-left: 3px; }
.m4 { margin-left: 4px; }
.m5 { margin-left: 5px; }
.m10 { margin-left: 10px; }

.title { height: 24px; background: #fff; display: flex; align-items: center; flex: none; }
.appicon { width: 18px; height: 18px; margin: 0 4px 0 2px; }
.title-text { font-size: 11.500px; }
.winbtns { margin-left: auto; display: flex; margin-right: 1px; align-self: flex-start; }
.wb { width: 46px; height: 24px; }

.menu { height: 24px; display: flex; align-items: center; background: linear-gradient(90deg, #f3f3f3, #f6f6f6 50%, #fafafa); padding-left: 12px; gap: 15.200px; flex: none; padding-bottom: 1px; }
.menu span { white-space: nowrap; }

.bars { height: 79px; flex: none; background: linear-gradient(90deg, #f3f3f3, #f6f6f6 50%, #f9f9f9); display: flex; flex-direction: column; }
.row { height: 26px; display: flex; align-items: stretch; flex: none; }
.tb { display: flex; align-items: center; background: #f7f7f7; border-radius: 3px; padding-left: 1px; height: 25px; margin-left: 3px; }
.t1 { width: 506px; }
.t2 { width: 258px; margin-left: 3px; }
.t3 { width: 556px; margin-left: 3px; }
.t4 { width: 455px; }
.t4 > .grip { margin-right: -2px; }
.t5 { width: 203px; margin-left: 3px; }
.t6 { width: 661px; margin-left: 3px; }
.t7 { width: 159px; }
.grip { width: 7px; height: 17px; background: radial-gradient(circle, #8c8c8c 1px, transparent 1.200px) 0 0 / 4px 4px repeat-y; }
.ic { width: 22px; height: 22px; display: flex; align-items: center; justify-content: center; }
.ic svg { width: 16px; height: 16px; }
.on { background: #cce8ff; border: 1px solid #0078d7; }
.sep { width: 1px; height: 18px; margin-left: 2px; margin-right: 2px; background: #bcbcbc; }
.sep.m2 { margin-left: 3px; }
.sep.tall { height: 24px; margin: 0 3px; background: #9a9a9a; }
.drop { width: 9px; height: 12px; position: relative; }
.drop::after { content: ""; position: absolute; left: 1px; top: 4px; border: 3.500px solid transparent; border-top: 4px solid #111; border-bottom: 0; }
.drop.lt::after { border-top-color: #b4b4b4; }
.lab { white-space: nowrap; padding-left: 4px; }
.gs { padding-left: 4px; }
.over { width: 11px; height: 23px; flex: none; margin: 1px 0 0 0; position: relative; background: linear-gradient(#f7f7f7 30%, #b8b8b8); }
.over::before { content: ""; position: absolute; top: 4px; left: 3px; width: 6px; height: 4px; background: #333; clip-path: polygon(0 0, 40% 50%, 0 100%, 0 0, 50% 0, 100% 50%, 50% 100%); }
.over::after { content: ""; position: absolute; left: 2px; bottom: 2px; width: 7px; height: 6px; background: #111; clip-path: polygon(0 0, 100% 0, 100% 17%, 0 17%, 0 50%, 100% 50%, 50% 100%); }
.o7 { height: 20px; margin-top: 4px; }
.o3 { margin-left: 2px; }
.combo { display: flex; align-items: center; background: #fff; border: 1px solid #7a7a7a; height: 22px; position: relative; flex: none; }
.combo span { padding-left: 3px; white-space: nowrap; }
.chev { width: 10px; height: 6px; position: absolute; right: 6px; top: 8px; }
.scale { width: 148px; font-size: 12px; }
.georef { width: 180px; background: #c8c8c8; border-color: #c8c8c8; }
.rotinp { width: 74px; height: 18px; margin-left: 5px; }
.geo { padding-left: 4px; }
.font { width: 171px; font-family: "Liberation Sans", sans-serif; letter-spacing: -.3px; font-size: 12px; }
.fo { width: 14px; height: 16px; margin-left: 3px; }
.size { width: 46px; font-family: "Liberation Sans", sans-serif; font-size: 12px; }
.fmt { width: 22px; text-align: center; font: bold 13px "Liberation Serif", serif; }
.fmt.it { font-style: italic; }
.fmt.un { text-decoration: underline; }
.rect { width: 13px; height: 13px; border: 1px solid #333; background: #fff; }
.bigA { font: bold 16px "Liberation Serif", serif; }
.colr { width: 20px; height: 22px; position: relative; display: flex; flex-direction: column; align-items: center; }
.cA { font: bold 14px/17px "Liberation Serif", serif; }
.cs { width: 16px; height: 12px; margin-top: 4px; margin-bottom: 1px; }
.cbar { width: 18px; height: 3px; position: absolute; bottom: 1px; }
.cb-k { background: #000; }
.cb-y { background: #ffffa8; }

.main { height: 580px; flex: none; display: flex; align-items: stretch; }
.toc { width: 204px; flex: none; display: flex; flex-direction: column; }
.dockhead { height: 20px; flex: none; display: flex; align-items: center; padding: 0 5px 2px 3px; background: linear-gradient(90deg, #c4d2df, #d2e0ed); }
.toc .dockhead { margin-left: 1px; padding-left: 3px; margin-right: 1px; }
.pin { width: 9px; height: 11px; margin-left: auto; margin-right: 7px; flex: none; }
.close { width: 9px; height: 9px; flex: none; }
.toctools { height: 25px; flex: none; display: flex; align-items: center; padding-left: 3px; background: #f7f7f7; margin: 0 1px; }
.treebox { flex: 1; min-height: 0; display: flex; flex-direction: column; background: #fff; border: 1px solid #a0a0a0; border-width: 1px 2px 2px 1px; margin-right: 1px; }
.treewrap { flex: 1; min-height: 0; display: flex; }
.tree { flex: 1; min-width: 0; overflow: hidden; padding: 1px 0 0; }
.tr, .lg { height: 18.040px; display: flex; align-items: center; white-space: nowrap; font-size: 12px; }
.tr span { letter-spacing: -.2px; flex: none; }
.ex { width: 9px; height: 9px; border: 1px solid #8a8a8a; position: relative; background: #f4f4f4; }
.ex::after { content: ""; position: absolute; left: 1px; right: 1px; top: 3px; height: 1px; background: #222; }
.ti { width: 16px; height: 16px; margin: 0 5px 0 6px; flex: none; }
.l0 { padding-left: 8px; }
.l0 strong { font-size: 11.500px; font-weight: 700; }
.l1 { padding-left: 28px; }
.l2 { padding-left: 47px; }
.cb { width: 11px; height: 11px; border: 1px solid #222; margin: 0 8px 0 7px; position: relative; background: #fff; }
.ck::after { content: ""; position: absolute; left: 1.500px; top: 0; width: 5px; height: 7px; border: solid #111; border-width: 0 2px 2px 0; transform: rotate(40deg) scale(.9); }
.lg { padding-left: 78px; }
.sw { width: 15px; height: 11px; border: 1px solid #6e6e6e; }
.ln { width: 14px; height: 1px; }
.ln-b { background: #1e9bff; }
.ln-r { background: #e8391a; }
.s-br { background: #a87000; }
.s-gr { background: #4ce600; }
.s-ye { background: #e8e800; }
.s-bl { background: #0070ff; }
.s-wh { background: #fff; }
.s-py { background: #fffbc8; }
.s-pk { background: #f5cbb8; }
.s-pb { background: #bee3f3; }
.vs { background: #f0f0f0; display: flex; flex-direction: column; align-items: center; flex: none; position: relative; }
.tocv { width: 16px; margin-right: 1px; }
.sa { width: 9px; height: 7px; margin-top: 7px; flex: none; }
.sa.dn { margin: auto 0 4px; }
.tocv .thumb { width: 100%; height: 292px; background: #cdcdcd; margin-top: 3px; }
.hs { height: 16px; background: #f0f0f0; display: flex; align-items: center; flex: none; }
.sb { width: 7px; height: 9px; flex: none; }
.toch { padding-left: 7px; margin: 0 1px; }
.toch .thumb { width: 77px; height: 100%; background: #cdcdcd; margin-left: 3px; }
.sb.rt { margin-left: auto; margin-right: 22px; }

.mapcol { width: 831px; flex: none; margin-left: 3px; display: flex; flex-direction: column; }
.maprow { flex: 1; min-height: 0; display: flex; }
.map { width: 815px; height: 562px; flex: none; background: #fff; border-top: 2px solid #7f7f7f; border-left: 1px solid #7f7f7f; border-right: 1px solid #d8d8d8; font-family: "Liberation Sans", sans-serif; }
.lbl-lg { font-size: 12px; fill: #111; }
.lbl-sm { font-size: 10px; fill: #111; letter-spacing: .25px; }
.mapv { width: 15px; border-top: 2px solid #7f7f7f; margin-left: 1px; }
.mapv .sa { margin-top: 3px; }
.mapv .thumb { width: 14px; height: 24px; background: #cdcdcd; margin-top: 261px; }
.maph { height: 18px; flex: none; display: flex; align-items: center; border-left: 1px solid #7f7f7f; padding-left: 2px; background: #f0f0f0; border-top: 1px solid #d8d8d8; }
.vb { width: 16px; height: 15px; margin-right: 1px; display: flex; align-items: center; justify-content: center; }
.vb svg { width: 12px; height: 12px; }
.vb.on { background: #a9d3f0; border: 1px solid #8dbce0; }
.vsep { width: 1px; height: 14px; background: #999; margin: 0 4px 0 2px; }
.maph .sb.ml { margin-left: 5px; }
.maph .thumb { width: 46px; height: 14px; background: #cdcdcd; margin-left: 221px; }
.maph .sb.rt { margin-right: 20px; }

.search { width: 299px; flex: none; margin-left: 6px; background: #fff; display: flex; flex-direction: column; }
.stools { height: 27px; flex: none; display: flex; align-items: center; padding-left: 1px; background: #f0f0f0; border-bottom: 1px solid #c4c4c4; margin-top: 1px; }
.local { width: 156px; height: 23px; margin-left: 9px; background: #e1e1e1; border: 1px solid #adadad; font-size: 12.500px; }
.sbody { padding: 7px 0 0 9px; border-bottom: 1px solid #c8c8c8; height: 78px; flex: none; font-size: 10.500px; }
.tabs { display: flex; align-items: center; height: 14px; }
.tabs strong { font-size: 10.500px; width: 39px; padding-left: 1px; }
.tabs a { color: #2a6fd8; text-decoration: underline; letter-spacing: .4px; margin-right: 19px; }
.sinput { display: flex; align-items: center; margin-top: 4px; }
.sfield { width: 237px; height: 24px; border: 1px solid #aaa; border-width: 2px 1px 1px 2px; border-top-color: #6e6e6e; border-left-color: #6e6e6e; background: #fff; }
.lens { width: 22px; height: 22px; margin-left: 9px; }
.extent { display: flex; align-items: center; margin-top: 4px; }
.extent a { color: #0a6ad8; text-decoration: underline; letter-spacing: .35px; margin-right: 3px; }

.sidetabs { width: 20px; margin-left: 2px; padding-top: 2px; flex: none; display: flex; flex-direction: column; }
.stab { width: 20px; border: 1px solid #a8a8a8; border-right: 0; border-radius: 4px 0 0 4px; display: flex; flex-direction: column; align-items: center; background: #f0f0f0; }
.stab svg { width: 15px; height: 15px; margin: 3px 0 3px 1px; flex: none; }
.stab span { writing-mode: vertical-rl; font: 12px "Liberation Sans", sans-serif; color: #555; white-space: nowrap; letter-spacing: .25px; }
.stab.a { height: 78px; }
.stab.c { height: 71px; margin-top: 1px; }
.stab.f { height: 116px; margin-top: 1px; }

.status { height: 21px; flex: none; display: flex; align-items: center; background: #f0f0f0; padding-left: 1113px; position: relative; font-size: 11px; letter-spacing: -.15px; }
.stcell { position: absolute; top: 2px; bottom: 1px; width: 1px; background: #e2e2e2; }
.c1 { left: 1088px; }
.c2 { left: 1108px; }
.taskline { height: 1px; display: flex; background: #333; flex: none; }
.tk { height: 1px; }
.d1 { width: 48px; background: #2b2b20; }
.g1 { width: 344px; background: #b0b0b0; }
.d2 { width: 296px; background: #2b2b20; }
```
